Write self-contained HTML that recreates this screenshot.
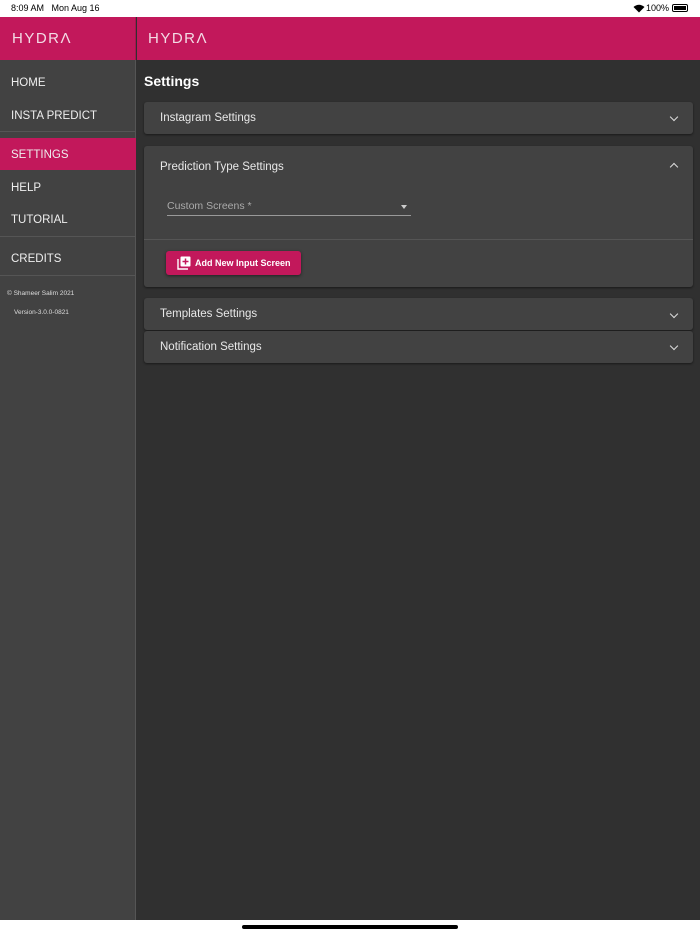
<!DOCTYPE html><html><head><style>
*{margin:0;padding:0;box-sizing:border-box}
body{width:700px;height:934px;position:relative;background:#303030;font-family:"Liberation Sans",sans-serif;overflow:hidden;color:#fff}
.a{position:absolute;white-space:nowrap}
.sb{left:0;top:0;width:700px;height:17px;background:#fff;color:#000;font-size:9px}
.nav{left:0;top:17px;width:136px;height:903px;background:#424242;border-right:1px solid #555}
.hdr{top:17px;height:43px;background:#c2185b}
.logo{font-size:15px;letter-spacing:1.5px;color:#f3dbe5;font-weight:normal}
.ni{left:11px;font-size:11.5px;color:#eee}
.dv{left:0;width:136px;height:1px;background:#555}
.card{left:144px;width:549px;background:#424242;border-radius:3px;box-shadow:0 1px 2px rgba(0,0,0,.5)}
.ct{left:16px;font-size:11.5px;color:#e8e8e8}
.chev{right:16px;width:6px;height:6px;border-right:1.5px solid #ddd;border-bottom:1.5px solid #ddd}
</style></head><body>
<div class="a sb"><span class="a" style="left:11px;top:3px">8:09 AM&nbsp;&nbsp;&nbsp;Mon Aug 16</span><span class="a" style="left:646px;top:3px">100%</span>
<svg class="a" style="left:633px;top:4px" width="12" height="9" viewBox="0 0 12 9"><path d="M6 8.5L0.5 3Q6-1.5 11.5 3Z" fill="#000"/></svg>
<div class="a" style="left:672px;top:4px;width:16px;height:8px;border:1px solid #000;border-radius:2px;padding:1px"><div style="background:#000;width:100%;height:100%"></div></div></div>
<div class="a nav"></div>
<div class="a hdr" style="left:0;width:136px;border-right:1px solid #a8134d"><span class="a logo" style="left:12px;top:13px">HYDRΛ</span></div>
<div class="a hdr" style="left:137px;width:563px"><span class="a logo" style="left:11px;top:13px">HYDRΛ</span></div>
<div class="a ni" style="top:77px">HOME</div>
<div class="a ni" style="top:110px">INSTA PREDICT</div>
<div class="a dv" style="top:131px"></div>
<div class="a" style="left:0;top:138px;width:136px;height:32px;background:#c2185b"></div>
<div class="a ni" style="top:149px">SETTINGS</div>
<div class="a ni" style="top:182px">HELP</div>
<div class="a ni" style="top:214px">TUTORIAL</div>
<div class="a dv" style="top:236px"></div>
<div class="a ni" style="top:253px">CREDITS</div>
<div class="a dv" style="top:275px"></div>
<div class="a" style="left:7px;top:290px;font-size:6.5px;color:#ddd">© Shameer Salim 2021</div>
<div class="a" style="left:14px;top:309px;font-size:6.5px;color:#ddd">Version-3.0.0-0821</div>
<div class="a" style="left:144px;top:73px;font-size:14px;font-weight:bold">Settings</div>
<div class="a card" style="top:102px;height:32px"><span class="a ct" style="top:10px">Instagram Settings</span><div class="a chev" style="top:12px;transform:rotate(45deg)"></div></div>
<div class="a card" style="top:146px;height:141px"><span class="a ct" style="top:15px">Prediction Type Settings</span><div class="a chev" style="top:18px;transform:rotate(225deg)"></div>
<span class="a" style="left:23px;top:54px;font-size:10.5px;color:#aaa">Custom Screens *</span>
<div class="a" style="left:257px;top:59px;border:3.5px solid transparent;border-top:4px solid #ccc"></div>
<div class="a" style="left:23px;top:69px;width:244px;height:1px;background:#999"></div>
<div class="a" style="left:0;top:93px;width:549px;height:1px;background:#555"></div>
<div class="a" style="left:22px;top:105px;width:135px;height:24px;background:#c2185b;border-radius:3px;box-shadow:0 1px 3px rgba(0,0,0,.5)">
<svg class="a" style="left:11px;top:5px" width="14" height="14" viewBox="0 0 14 14"><path d="M1 3v10h10" stroke="#fff" stroke-width="1.4" fill="none"/><rect x="3.5" y="0.5" width="10" height="10" fill="#fff" rx="1"/><path d="M8.5 2.5v6M5.5 5.5h6" stroke="#c2185b" stroke-width="1.5"/></svg>
<span class="a" style="left:29px;top:7px;font-size:9px;font-weight:bold">Add New Input Screen</span></div></div>
<div class="a card" style="top:298px;height:32px"><span class="a ct" style="top:10px">Templates Settings</span><div class="a chev" style="top:13px;transform:rotate(45deg)"></div></div>
<div class="a card" style="top:331px;height:32px"><span class="a ct" style="top:10px">Notification Settings</span><div class="a chev" style="top:12px;transform:rotate(45deg)"></div></div>
<div class="a" style="left:0;top:920px;width:700px;height:14px;background:#fff"><div class="a" style="left:242px;top:5px;width:216px;height:4px;border-radius:2px;background:#000"></div></div>
</body></html>
